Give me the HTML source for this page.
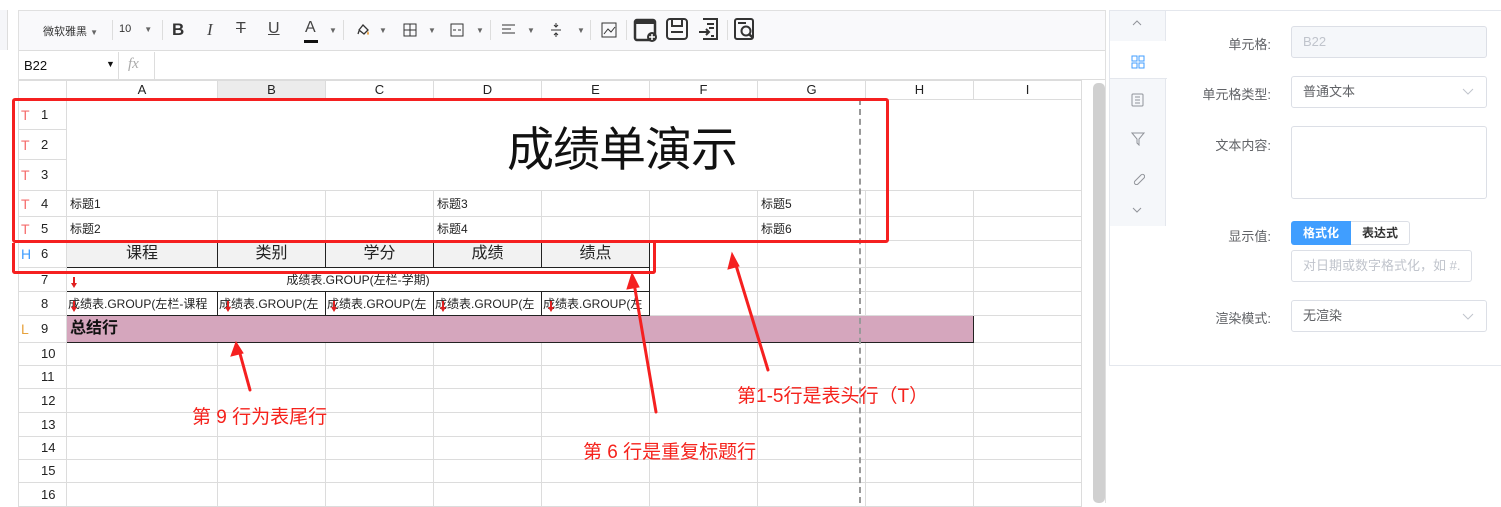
<!DOCTYPE html>
<html><head><meta charset="utf-8">
<style>
*{box-sizing:border-box;margin:0;padding:0}
body{width:1501px;height:503px;overflow:hidden;background:#fff;font-family:"Liberation Sans","Noto Sans CJK SC",sans-serif;position:relative;color:#333}
.a{position:absolute}
table{border-collapse:collapse;table-layout:fixed}
td{border:1px solid #dcdcdc;font-size:12px;padding:0 3px;white-space:nowrap;overflow:hidden;color:#222;line-height:14px}
td.rh{text-align:left;padding-left:22px;font-size:13px;color:#222;position:relative}
.mk{position:absolute;left:2px;top:50%;transform:translateY(-50%);font-size:14px}
.hd td{text-align:center;font-size:16px;background:#f2f2f2;border-color:#222}
.tb{color:#444;font-size:16px}
.lbl{position:absolute;font-size:13px;color:#606266;text-align:right;width:120px}
.inp{position:absolute;border:1px solid #dcdfe6;border-radius:3px;font-size:13px;color:#606266;padding-left:11px}
.ann{position:absolute;color:#f5221c;font-size:19px}
.dn{position:absolute;width:0;height:0;border-left:3px solid transparent;border-right:3px solid transparent;border-top:5px solid #e02020}
.dn:before{content:"";position:absolute;left:-1px;top:-11px;width:2px;height:7px;background:#e02020}
</style></head><body>
<div class="a" style="left:0;top:10px;width:8px;height:40px;background:#f5f6f9;border-right:1px solid #ddd"></div>
<div class="a" style="left:18px;top:10px;width:1088px;height:493px;border:1px solid #e0e0e0;border-bottom:none"></div>
<div class="a" style="left:19px;top:11px;width:1086px;height:40px;background:#f9f9fb;border-bottom:1px solid #ddd"></div>
<div class="a tb" style="left:43px;top:23px;font-size:11px;color:#333">微软雅黑 <span style="font-size:8px;color:#666">▼</span></div>
<div class="a" style="left:112px;top:20px;width:1px;height:20px;background:#ddd"></div>
<div class="a tb" style="left:119px;top:23px;font-size:11px;color:#333">10 <span style="font-size:8px;color:#666;margin-left:10px">▼</span></div>
<div class="a" style="left:162px;top:20px;width:1px;height:20px;background:#ddd"></div>
<div class="a tb" style="left:172px;top:20px;font-weight:bold;font-size:17px;color:#333">B</div>
<div class="a tb" style="left:207px;top:20px;font-style:italic;font-family:'Liberation Serif',serif;font-size:17px">I</div>
<div class="a tb" style="left:236px;top:20px;text-decoration:line-through">T</div>
<div class="a tb" style="left:268px;top:20px;text-decoration:underline">U</div>
<div class="a tb" style="left:305px;top:19px">A</div>
<div class="a" style="left:304px;top:40px;width:14px;height:3px;background:#111"></div>
<div class="a" style="left:329px;top:26px;font-size:8px;color:#666">▼</div>
<div class="a" style="left:343px;top:20px;width:1px;height:20px;background:#ddd"></div>
<svg class="a" style="left:355px;top:22px" width="16" height="16" viewBox="0 0 16 16"><path d="M4 8 L8 3 L13 8 L9 12 Z M3 12 L4 9" fill="none" stroke="#333" stroke-width="1.3"/><path d="M13 9 q2 3 0 4 q-2-1 0-4" fill="#e8a040"/></svg>
<div class="a" style="left:379px;top:26px;font-size:8px;color:#666">▼</div>
<svg class="a" style="left:403px;top:23px" width="14" height="14"><rect x="1" y="1" width="12" height="12" fill="none" stroke="#333"/><path d="M7 1V13M1 7H13" stroke="#333"/></svg>
<div class="a" style="left:428px;top:26px;font-size:8px;color:#666">▼</div>
<svg class="a" style="left:450px;top:23px" width="14" height="14"><rect x="1" y="1" width="12" height="12" fill="none" stroke="#333"/><path d="M3 7h3M8 7h3" stroke="#333"/></svg>
<div class="a" style="left:476px;top:26px;font-size:8px;color:#666">▼</div>
<div class="a" style="left:490px;top:20px;width:1px;height:20px;background:#ddd"></div>
<svg class="a" style="left:501px;top:24px" width="16" height="12"><path d="M1 1h13M1 5h9M1 9h13" stroke="#333"/></svg>
<div class="a" style="left:527px;top:26px;font-size:8px;color:#666">▼</div>
<svg class="a" style="left:550px;top:22px" width="12" height="16"><path d="M1 8h10M6 1v4M6 11v4M4 3l2 2 2-2M4 13l2-2 2 2" stroke="#333" fill="none"/></svg>
<div class="a" style="left:577px;top:26px;font-size:8px;color:#666">▼</div>
<div class="a" style="left:590px;top:20px;width:1px;height:20px;background:#ddd"></div>
<svg class="a" style="left:601px;top:22px" width="16" height="16"><rect x="1" y="1" width="14" height="14" fill="none" stroke="#333"/><path d="M3 12l4-5 3 3 4-5" stroke="#333" fill="none"/></svg>
<div class="a" style="left:626px;top:20px;width:1px;height:20px;background:#ddd"></div>
<svg class="a" style="left:633px;top:17px" width="26" height="26"><rect x="2" y="3" width="20" height="20" rx="2" fill="none" stroke="#333" stroke-width="2.5"/><rect x="2" y="3" width="20" height="4" fill="#333"/><circle cx="19" cy="20" r="5" fill="#333"/><path d="M19 17v6M16 20h6" stroke="#fff" stroke-width="1.5"/></svg>
<svg class="a" style="left:665px;top:17px" width="24" height="24"><rect x="2" y="2" width="20" height="20" rx="3" fill="none" stroke="#333" stroke-width="2"/><path d="M7 2v7h10V2M6 15h12" stroke="#333" stroke-width="2" fill="none"/></svg>
<svg class="a" style="left:697px;top:17px" width="24" height="24"><path d="M6 2h14v20H6" fill="none" stroke="#333" stroke-width="2"/><path d="M10 7h7M12 11h5M2 15h10M9 12l3 3-3 3M14 19h3" stroke="#333" stroke-width="2" fill="none"/></svg>
<div class="a" style="left:727px;top:20px;width:1px;height:20px;background:#ddd"></div>
<svg class="a" style="left:733px;top:17px" width="24" height="24"><rect x="2" y="2" width="18" height="20" rx="2" fill="none" stroke="#333" stroke-width="2"/><path d="M5 6h8" stroke="#333" stroke-width="2"/><circle cx="13" cy="14" r="4.5" fill="none" stroke="#333" stroke-width="2"/><path d="M16 17l4 4" stroke="#333" stroke-width="2.5"/></svg>
<div class="a" style="left:19px;top:52px;width:1086px;height:28px;border-bottom:1px solid #ddd"></div>
<div class="a" style="left:24px;top:58px;font-size:13px;color:#111">B22</div>
<div class="a" style="left:106px;top:59px;font-size:9px;color:#111">▼</div>
<div class="a" style="left:118px;top:52px;width:1px;height:28px;background:#ddd"></div>
<div class="a" style="left:128px;top:56px;font-size:15px;color:#aaa;font-style:italic;font-family:'Liberation Serif',serif">fx</div>
<div class="a" style="left:154px;top:52px;width:1px;height:28px;background:#ddd"></div>
<table class="a" style="left:18px;top:80px">
<tr style="height:19px"><td style="width:48px;border-color:#ddd"></td>
<td style="width:151px;text-align:center;font-size:13px">A</td><td style="width:108px;text-align:center;font-size:13px;background:#ececec">B</td><td style="width:108px;text-align:center;font-size:13px">C</td><td style="width:108px;text-align:center;font-size:13px">D</td><td style="width:108px;text-align:center;font-size:13px">E</td><td style="width:108px;text-align:center;font-size:13px">F</td><td style="width:108px;text-align:center;font-size:13px">G</td><td style="width:108px;text-align:center;font-size:13px">H</td><td style="width:108px;text-align:center;font-size:13px">I</td></tr>
</table>
<table class="a" style="left:18px;top:99px">
<colgroup><col style="width:48px"><col style="width:151px"><col style="width:108px"><col style="width:108px"><col style="width:108px"><col style="width:108px"><col style="width:108px"><col style="width:108px"><col style="width:108px"><col style="width:108px"></colgroup>
<tr style="height:30px"><td class="rh"><span class="mk" style="color:#f56c6c">T</span>1</td><td colspan="9" rowspan="3"></td></tr>
<tr style="height:30px"><td class="rh"><span class="mk" style="color:#f56c6c">T</span>2</td></tr>
<tr style="height:31px"><td class="rh"><span class="mk" style="color:#f56c6c">T</span>3</td></tr>
<tr style="height:26px"><td class="rh"><span class="mk" style="color:#f56c6c">T</span>4</td><td>标题1</td><td></td><td></td><td>标题3</td><td></td><td></td><td>标题5</td><td></td><td></td></tr>
<tr style="height:24px"><td class="rh"><span class="mk" style="color:#f56c6c">T</span>5</td><td>标题2</td><td></td><td></td><td>标题4</td><td></td><td></td><td>标题6</td><td></td><td></td></tr>
<tr style="height:27px" class="hd"><td class="rh" style="background:#fff;border-color:#dcdcdc;font-size:13px;text-align:left"><span class="mk" style="color:#409eff">H</span>6</td><td>课程</td><td>类别</td><td>学分</td><td>成绩</td><td>绩点</td><td style="background:#fff;border-color:#dcdcdc"></td><td style="background:#fff;border-color:#dcdcdc"></td><td style="background:#fff;border-color:#dcdcdc"></td><td style="background:#fff;border-color:#dcdcdc"></td></tr>
<tr style="height:24px"><td class="rh">7</td><td colspan="5" style="text-align:center;border:1px solid #222">成绩表.GROUP(左栏-学期)</td><td></td><td></td><td></td><td></td></tr>
<tr style="height:24px"><td class="rh">8</td><td style="border:1px solid #222;padding:0 1px">成绩表.GROUP(左栏-课程</td><td style="border:1px solid #222;padding:0 1px">成绩表.GROUP(左</td><td style="border:1px solid #222;padding:0 1px">成绩表.GROUP(左</td><td style="border:1px solid #222;padding:0 1px">成绩表.GROUP(左</td><td style="border:1px solid #222;padding:0 1px">成绩表.GROUP(左</td><td></td><td></td><td></td><td></td></tr>
<tr style="height:27px"><td class="rh"><span class="mk" style="color:#e6a23c">L</span>9</td><td colspan="8" style="background:#d5a6bd;border:1px solid #222;font-weight:bold;font-size:16px;color:#111;line-height:18px">总结行</td><td></td></tr>
<tr style="height:23px"><td class="rh">10</td><td></td><td></td><td></td><td></td><td></td><td></td><td></td><td></td><td></td></tr>
<tr style="height:23px"><td class="rh">11</td><td></td><td></td><td></td><td></td><td></td><td></td><td></td><td></td><td></td></tr>
<tr style="height:24px"><td class="rh">12</td><td></td><td></td><td></td><td></td><td></td><td></td><td></td><td></td><td></td></tr>
<tr style="height:24px"><td class="rh">13</td><td></td><td></td><td></td><td></td><td></td><td></td><td></td><td></td><td></td></tr>
<tr style="height:23px"><td class="rh">14</td><td></td><td></td><td></td><td></td><td></td><td></td><td></td><td></td><td></td></tr>
<tr style="height:23px"><td class="rh">15</td><td></td><td></td><td></td><td></td><td></td><td></td><td></td><td></td><td></td></tr>
<tr style="height:24px"><td class="rh">16</td><td></td><td></td><td></td><td></td><td></td><td></td><td></td><td></td><td></td></tr>
</table>
<div class="a" style="left:507px;top:122px;font-size:47px;color:#111;line-height:56px;letter-spacing:-1px">成绩单演示</div>
<div class="dn" style="left:71px;top:283px"></div>
<div class="dn" style="left:71px;top:307px"></div>
<div class="dn" style="left:225px;top:307px"></div>
<div class="dn" style="left:331px;top:307px"></div>
<div class="dn" style="left:440px;top:307px"></div>
<div class="dn" style="left:548px;top:307px"></div>
<div class="a" style="left:859px;top:99px;width:0;height:404px;border-left:2px dashed #999"></div>
<div class="a" style="left:1093px;top:83px;width:12px;height:420px;background:#d0d0d0;border-radius:5px"></div>
<div class="a" style="left:12px;top:98px;width:877px;height:145px;border:3px solid #f52020;border-radius:3px"></div>
<div class="a" style="left:12px;top:243px;width:644px;height:31px;border:3px solid #f52020;border-top:none;border-radius:0 0 3px 3px"></div>
<svg class="a" style="left:0;top:0" width="1100" height="503">
<g fill="#f52020" stroke="#f52020" stroke-linecap="round">
<path d="M250 390 L239 350" stroke-width="3"/><path d="M236 342 l-5 14 12-3z"/>
<path d="M656 412 L634 283" stroke-width="3"/><path d="M632 273 l-5 16 12-2z"/>
<path d="M768 370 L735 262" stroke-width="3"/><path d="M732 253 l-4 16 11-3z"/>
</g></svg>
<div class="ann" style="left:192px;top:402px">第 9 行为表尾行</div>
<div class="ann" style="left:583px;top:437px">第 6 行是重复标题行</div>
<div class="ann" style="left:737px;top:381px">第1-5行是表头行（T）</div>
<div class="a" style="left:1109px;top:10px;width:392px;height:356px;border:1px solid #e4e7ed;border-right:none"></div>
<div class="a" style="left:1110px;top:11px;width:56px;height:215px;background:#f5f7fa;border-right:1px solid #e4e7ed"></div>
<div class="a" style="left:1110px;top:41px;width:57px;height:38px;background:#fff;border-bottom:1px solid #e4e7ed"></div>
<svg class="a" style="left:1130px;top:18px" width="14" height="10"><path d="M3 7l4-4 4 4" stroke="#909399" fill="none"/></svg>
<svg class="a" style="left:1131px;top:55px" width="14" height="14"><g fill="none" stroke="#409eff"><rect x="1" y="1" width="5" height="5"/><rect x="8" y="1" width="5" height="5"/><rect x="1" y="8" width="5" height="5"/><rect x="8" y="8" width="5" height="5"/></g></svg>
<svg class="a" style="left:1131px;top:93px" width="14" height="14"><rect x="1" y="1" width="11" height="12" rx="1" fill="none" stroke="#909399"/><path d="M4 4h5M4 7h5M4 10h5" stroke="#909399"/></svg>
<svg class="a" style="left:1131px;top:132px" width="14" height="14"><path d="M1 1h12L8 7v6L6 11V7z" fill="none" stroke="#909399"/></svg>
<svg class="a" style="left:1131px;top:171px" width="14" height="14"><path d="M6 8l4-4a2 2 0 013 3l-4 4M8 6l-4 4a2 2 0 003 3l4-4" fill="none" stroke="#909399"/></svg>
<svg class="a" style="left:1130px;top:205px" width="14" height="10"><path d="M3 3l4 4 4-4" stroke="#909399" fill="none"/></svg>
<div class="lbl" style="left:1151px;top:34px">单元格:</div>
<div class="inp" style="left:1291px;top:26px;width:196px;height:32px;background:#f5f7fa;color:#c0c4cc;line-height:30px">B22</div>
<div class="lbl" style="left:1151px;top:84px">单元格类型:</div>
<div class="inp" style="left:1291px;top:76px;width:196px;height:32px;line-height:30px">普通文本</div>
<svg class="a" style="left:1461px;top:86px" width="14" height="10"><path d="M2 3l5 5 5-5" stroke="#c0c4cc" fill="none"/></svg>
<div class="lbl" style="left:1151px;top:135px">文本内容:</div>
<div class="inp" style="left:1291px;top:126px;width:196px;height:73px"></div>
<div class="lbl" style="left:1151px;top:226px">显示值:</div>
<div class="a" style="left:1291px;top:221px;width:60px;height:24px;background:#409eff;color:#fff;font-size:12px;text-align:center;line-height:24px;border-radius:3px 0 0 3px;font-weight:bold">格式化</div>
<div class="a" style="left:1351px;top:221px;width:59px;height:24px;border:1px solid #dcdfe6;border-left:none;font-size:12px;text-align:center;line-height:22px;border-radius:0 3px 3px 0;color:#333;font-weight:bold">表达式</div>
<div class="inp" style="left:1291px;top:250px;width:181px;height:32px;line-height:30px;color:#c0c4cc;overflow:hidden;white-space:nowrap">对日期或数字格式化，如 #.</div>
<div class="lbl" style="left:1151px;top:308px">渲染模式:</div>
<div class="inp" style="left:1291px;top:300px;width:196px;height:32px;line-height:30px">无渲染</div>
<svg class="a" style="left:1461px;top:311px" width="14" height="10"><path d="M2 3l5 5 5-5" stroke="#c0c4cc" fill="none"/></svg>
</body></html>
